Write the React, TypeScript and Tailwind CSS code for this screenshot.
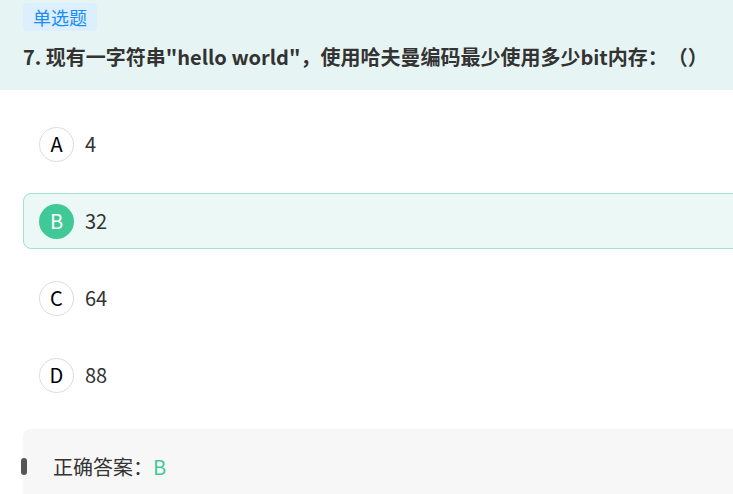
const options = [
  { key: "A", text: "4" },
  { key: "B", text: "32" },
  { key: "C", text: "64" },
  { key: "D", text: "88" },
];

const answer = "B";

export default function App() {
  return (
    <div
      className="h-[494px] w-[733px] overflow-hidden bg-white [text-spacing-trim:space-all]"
      style={{ fontFamily: '"Microsoft YaHei", "Noto Sans CJK SC", sans-serif' }}
    >
      <div className="w-[800px]">
        <div className="h-[90px] bg-[#e6f5f3] px-[23px] pt-[3px]">
          <span className="inline-block h-[28px] rounded-[4px] bg-[#dcefff] px-[10px] text-[18px] leading-[28px] text-[#1a8cf5]">
            单选题
          </span>
          <h2 className="mt-[12px] text-[20px] font-bold leading-[28px] text-[#333]">
            7. 现有一字符串"hello world"，使用哈夫曼编码最少使用多少bit内存：（）
          </h2>
        </div>

        <div className="flex flex-col gap-[21px] px-[23px] pt-[26px]">
          {options.map((o) => {
            const picked = o.key === answer;
            return (
              <div
                key={o.key}
                className={
                  picked
                    ? "flex h-[56px] items-center gap-[11px] rounded-[8px] border border-[#a3e2cc] bg-[#ecf8f5] pl-[15px]"
                    : "flex h-[56px] items-center gap-[11px] rounded-[8px] border border-transparent pl-[15px]"
                }
              >
                <span
                  className={
                    picked
                      ? "flex h-[35px] w-[35px] items-center justify-center rounded-full bg-[#40c997] text-[20px] text-white"
                      : "flex h-[35px] w-[35px] items-center justify-center rounded-full border border-[#dcdcdc] text-[20px] text-black"
                  }
                >
                  {o.key}
                </span>
                <span className="text-[20px] text-[#333]">{o.text}</span>
              </div>
            );
          })}
        </div>

        <div className="relative mt-[26px]">
          <span className="absolute left-[21px] top-[29px] h-[17px] w-[6px] rounded-full bg-[#555]" />
          <div className="ml-[23px] h-[80px] rounded-[8px] bg-[#f7f7f7] pl-[30px] pt-[24px] text-[20px] leading-[28px] text-[#333]">
            正确答案：<span className="text-[#40c997]">{answer}</span>
          </div>
        </div>
      </div>
    </div>
  );
}
